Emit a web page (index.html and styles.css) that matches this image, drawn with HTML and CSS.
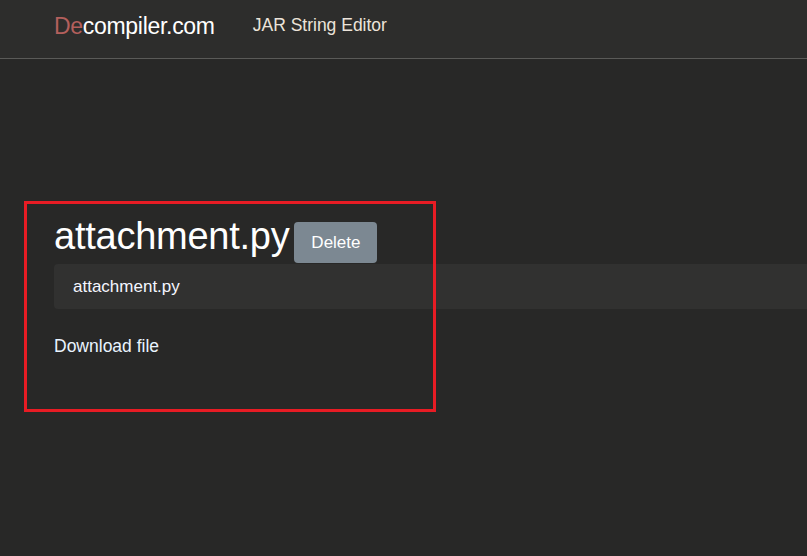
FILE: index.html
```html
<!DOCTYPE html>
<html>
<head>
<meta charset="utf-8">
<link rel="stylesheet" href="styles.css">
</head>
<body>
<nav class="navbar">
  <a class="brand"><span class="brand-de">De</span>compiler.com</a>
  <a class="nav-link">JAR String Editor</a>
</nav>
<main class="content">
  <div class="title-row">
    <h1 class="title">attachment.py</h1>
    <button class="btn-delete">Delete</button>
  </div>
  <div class="file-bar">attachment.py</div>
  <a class="download">Download file</a>
  <div class="highlight"></div>
</main>
</body>
</html>
```
FILE: styles.css
```css
html, body {
  margin: 0;
  padding: 0;
  height: 100%;
  background: #282827;
  font-family: "Liberation Sans", Arial, sans-serif;
  color: #fff;
}
body { min-height: 556px; }
.navbar {
  height: 58px;
  background: #2d2d2c;
  border-bottom: 1px solid #5a5a58;
  display: flex;
  align-items: center;
  padding-left: 54px;
  gap: 38px;
}
.brand {
  font-size: 23px;
  color: #fff;
  letter-spacing: -0.3px;
  position: relative;
  top: -3px;
}
.brand-de { color: #b35f5c; }
.nav-link {
  font-size: 17.5px;
  color: #ece4da;
  position: relative;
  top: -4px;
}
.content {
  position: relative;
  padding: 156px 0 0 54px;
  min-height: 300px;
}
.title-row {
  display: flex;
  align-items: flex-end;
  height: 49px;
}
.title {
  margin: 0;
  font-size: 38px;
  font-weight: normal;
  line-height: 44px;
  position: relative;
  top: -6px;
  letter-spacing: -0.25px;
}
.btn-delete {
  margin-left: 5px;
  width: 83px;
  height: 41px;
  background: #7c8892;
  color: #fff;
  border: none;
  border-radius: 4px;
  font-family: inherit;
  font-size: 17px;
  margin-bottom: 1px;
}
.file-bar {
  height: 45px;
  background: #313130;
  border-radius: 4px 0 0 4px;
  display: flex;
  align-items: center;
  padding-left: 19px;
  font-size: 17px;
  color: #f4f6ff;
}
.download {
  display: block;
  margin-top: 27px;
  font-size: 17.5px;
  color: #eaf4ff;
}
.highlight {
  position: absolute;
  left: 24px;
  top: 142px;
  width: 406px;
  height: 205px;
  border: 3px solid #e81c24;
}
```
